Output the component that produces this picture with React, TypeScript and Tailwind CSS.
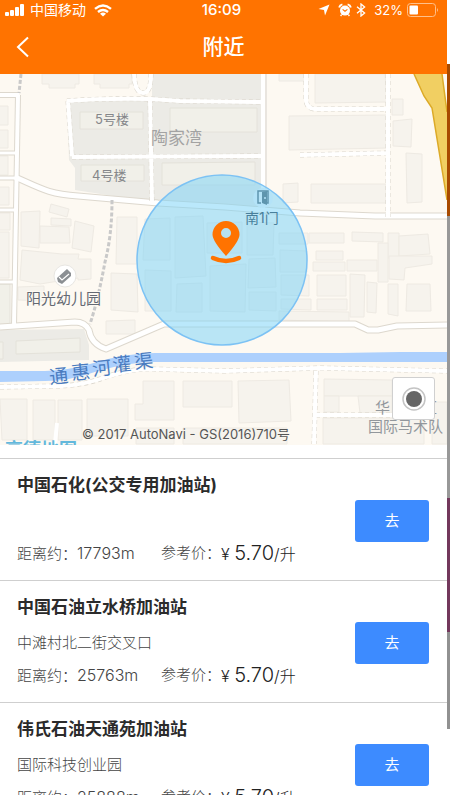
import { FC } from "react";

interface Station {
  id: number;
  name: string;
  address: string;
  distance: string;
  price: string;
}

const stations: Station[] = [
  { id: 1, name: "中国石化(公交专用加油站)", address: "", distance: "17793m", price: "5.70" },
  { id: 2, name: "中国石油立水桥加油站", address: "中滩村北二街交叉口", distance: "25763m", price: "5.70" },
  { id: 3, name: "伟氏石油天通苑加油站", address: "国际科技创业园", distance: "25888m", price: "5.70" },
];

// Building outlines, as svg points
const buildings: string[] = [
  "42,74 79,74 79,84 75,84 75,88 49,88 49,84 42,84",
  "94,74 132,74 132,84 129,84 129,88 100,88 100,84 94,84",
  "279,74 307,74 307,81 279,81",
  "315,74 385,74 387,102 315,103",
  "289,116 388,115 388,148 289,150",
  "392,99 403,99 403,115 392,115",
  "393,121 412,119 411,147 393,146",
  "406,153 422,154 422,202 407,203",
  "283,184 298,183 298,202 283,203",
  "311,184 386,184 386,203 311,203",
  "-1,106 8,106 8,125 -1,125",
  "-1,130 8,130 8,148 -1,148",
  "-1,156 8,156 8,175 -1,175",
  "-1,187 9,187 9,205 -1,205",
  "-1,213 10,213 10,230 -1,230",
  "-1,232 9,232 9,278 -1,278",
  "21,212 40,211 39,248 21,246",
  "51,204 69,209 67,217 49,212",
  "51,218 71,219 71,226 51,225",
  "40,226 69,227 70,243 40,243",
  "75,221 94,226 91,252 72,248",
  "22,250 62,254 79,254 78,259 91,259 91,279 78,280 78,278 40,284 20,280",
  "18,287 44,286 44,301 18,300",
  "117,217 137,217 137,264 116,264",
  "111,273 137,274 138,312 111,310",
  "106,321 135,320 135,334 106,334",
  "309,233 344,233 344,243 309,243",
  "352,232 383,233 383,242 352,241",
  "316,251 343,251 343,260 316,260",
  "388,233 399,233 399,258 388,258",
  "399,236 428,234 430,254 399,256",
  "378,243 388,243 388,282 378,282",
  "389,256 432,256 432,264 405,268 404,280 389,279",
  "313,262 345,262 345,271 313,271",
  "347,260 377,260 377,271 347,271",
  "317,275 346,275 346,296 317,296",
  "317,299 347,299 347,310 317,310",
  "350,274 365,275 364,317 350,317",
  "367,282 377,283 376,313 367,312",
  "388,284 398,284 398,316 388,314",
  "407,284 430,284 431,311 406,311",
  "279,311 349,312 349,322 279,320",
  "0,399 27,399 27,440 2,440",
  "33,400 55,400 55,440 33,440",
  "58,400 82,400 82,440 58,440",
  "87,399 128,399 128,436 87,436",
  "143,381 174,381 174,420 135,420 135,404 143,404",
  "183,381 232,381 232,407 183,407",
  "238,381 289,380 291,421 239,423",
  "324,379 392,380 392,396 324,396",
  "324,396 339,396 339,412 324,412",
  "358,396 392,396 392,413 360,413",
  "323,418 424,418 424,444 323,444",
  "432,402 447,402 447,444 432,444",
  "136,428 174,428 174,444 136,444",
  "183,428 287,428 287,444 183,444",
  "145,219 170,218 170,260 143,260",
  "175,217 203,216 206,276 175,278",
  "207,223 242,222 242,253 207,253",
  "247,222 274,223 273,255 247,255",
  "279,233 308,233 308,244 279,244",
  "145,270 171,271 171,311 145,311",
  "177,284 202,283 202,312 176,312",
  "210,266 246,264 245,312 210,311",
  "249,259 275,258 276,287 248,288",
  "249,292 276,292 276,311 249,310",
  "280,250 307,251 307,272 280,272",
  "281,275 309,275 309,296 281,295",
  "281,299 311,299 311,310 281,309",
];

// Buildings standing on the grey blocks
const blockBuildings: string[] = [
  "80,112 143,112 143,129 80,129",
  "81,165 144,165 144,181 81,181",
  "170,108 257,108 257,132 170,132",
  "162,163 255,162 255,185 162,185",
  "16,341 80,338 80,352 16,354",
  "-1,342 3,342 3,359 -1,359",
  "-1,284 10,284 10,325 -1,325",
];

const roads: { d: string; width: number }[] = [
  { d: "M18,95 L14,326", width: 4 },
  { d: "M0,95 H19", width: 4 },
  { d: "M0,153 H15", width: 3 },
  { d: "M0,178 H15", width: 3 },
  { d: "M0,210 H15", width: 3 },
  { d: "M0,282 H14", width: 3 },
  { d: "M15,177 C40,188 48,194 78,196 L158,203 L225,207 L300,213 L375,216 L447,216", width: 5 },
  { d: "M0,327 L75,322 Q85,322 89,330 Q91,344 106,349 L164,324 H355 L368,330 H378 L397,326 L447,325", width: 5 },
];

const StatusBar: FC = () => (
  <div className="grid h-5 grid-cols-[1fr_auto_1fr] items-center pl-1 pr-2 text-[13px] leading-5">
    <div className="flex items-center gap-1">
      <svg width="22" height="14" viewBox="0 0 22 14" fill="white">
        <rect x="1" y="9" width="4" height="4" rx="1" />
        <rect x="6" y="7" width="4" height="6" rx="1" />
        <rect x="11" y="4" width="4" height="9" rx="1" />
        <rect x="16" y="1" width="4" height="12" rx="1" />
      </svg>
      <span className="text-[14px]">中国移动</span>
      <svg width="18" height="13" viewBox="0 0 18 13" className="ml-1" fill="none" stroke="white" strokeWidth="2.4">
        <path d="M1,4.8 Q9,-2 17,4.8" />
        <path d="M4,8 Q9,3.8 14,8" />
        <path d="M9,12.6 L6,9.8 Q9,7.4 12,9.8 Z" fill="white" stroke="none" />
      </svg>
    </div>
    <span className="text-[15px] font-medium">16:09</span>
    <div className="flex items-center justify-end gap-1">
      <svg width="12" height="12" viewBox="0 0 12 12" fill="white">
        <path d="M11.5,0.5 L7,11.5 L6,6 L0.5,5 Z" />
      </svg>
      <svg width="14" height="14" viewBox="0 0 14 14" className="ml-1" fill="none" stroke="white">
        <circle cx="7" cy="7.6" r="5" fill="white" stroke="none" />
        <path d="M4.6,6.4 L7,8.2 L9.4,6.4" stroke="#ff7300" strokeWidth="1.1" />
        <path d="M1.2,4.4 Q1.8,2 4.4,1.4 M12.8,4.4 Q12.2,2 9.6,1.4" strokeWidth="2" />
        <path d="M3.6,11.6 L2.6,13 M10.4,11.6 L11.4,13" strokeWidth="1.4" />
      </svg>
      <svg width="10" height="14" viewBox="0 0 10 14" fill="none" stroke="white" strokeWidth="1.3">
        <path d="M1,3.8 L8.6,10 L5,13 V1 L8.6,4 L1,10.2" />
      </svg>
      <span className="ml-1">32%</span>
      <svg width="32" height="14" viewBox="0 0 32 14">
        <rect x="0.5" y="0.5" width="28" height="13" rx="3" fill="none" stroke="#ffc08a" />
        <rect x="2.5" y="2.5" width="8.5" height="9" rx="1" fill="white" />
        <path d="M30,5 Q32,7 30,9 Z" fill="#ffc08a" />
      </svg>
    </div>
  </div>
);

const Header: FC = () => (
  <header className="bg-[#ff7300] text-white">
    <StatusBar />
    <div className="grid h-[54px] grid-cols-[1fr_auto_1fr] items-center">
      <button aria-label="返回" className="flex h-full w-12 items-center pl-4">
        <svg width="14" height="22" viewBox="0 0 14 22" fill="none" stroke="white" strokeWidth="2">
          <path d="M12,1.5 L2,11 L12,20.5" />
        </svg>
      </button>
      <h1 className="text-[21px] font-medium">附近</h1>
    </div>
  </header>
);

const StationMap: FC = () => (
  <svg viewBox="0 74 447 371" preserveAspectRatio="xMidYMid slice" className="h-[371px] w-full bg-[#fdf9f2]">
    {/* Grey housing blocks */}
    <g fill="#ecebe6">
      <path d="M152,74 H261 V207 L158,203 L75,190 V168 L69,160 L67,99 L152,97 Z" />
      <path d="M0,330 L84,329 L89,345 V360 L0,362 Z" />
    </g>
    <g fill="#f6f3ed" stroke="#eeeae3">
      {buildings.map((points) => (
        <polygon key={points} points={points} />
      ))}
    </g>
    <g fill="#f1f0e9" stroke="#e4e2da">
      {blockBuildings.map((points) => (
        <polygon key={points} points={points} />
      ))}
    </g>

    {/* Yellow motorway */}
    <path d="M414,74 L424,96 L432,108 L447,200 V110 L442,74 Z" fill="#f1cf62" />
    <path d="M414,74 L424,96 L432,108 L447,200 M442,74 L447,112" fill="none" stroke="#dcaa28" strokeWidth="1.5" />

    {/* Roads: a casing first, then the white surface */}
    <g fill="none" stroke="#ddd8ce" strokeLinejoin="round">
      {roads.map((road) => (
        <path key={road.d} d={road.d} strokeWidth={road.width + 2} />
      ))}
    </g>
    <g fill="none" stroke="white" strokeLinejoin="round">
      {roads.map((road) => (
        <path key={road.d} d={road.d} strokeWidth={road.width} />
      ))}
    </g>

    {/* Footpaths */}
    <g fill="none" stroke="#dad5cb" strokeWidth="5" strokeDasharray="4 3">
      <path d="M134,74 Q135,93 143,93 Q151,93 151,74" />
      <path d="M67,101 Q105,98 151,99 L180,101 L262,102 M68,101 L72,156 M72,157 L262,156 M150,99 L152,202" />
      <path d="M306,74 V100 Q307,109 315,109 H389 M388,74 V217 M300,155 L389,153" />
      <path d="M0,387 L60,386 Q85,385 106,377 Q130,369 150,369 L225,371 L320,368 L447,371 M316,371 L314,444 M316,415 H392" />
    </g>
    <g fill="none" stroke="white" strokeWidth="4">
      <path d="M134,74 Q135,93 143,93 Q151,93 151,74" />
      <path d="M67,101 Q105,98 151,99 L180,101 L262,102 M68,101 L72,156 M72,157 L262,156 M150,99 L152,202" />
      <path d="M306,74 V100 Q307,109 315,109 H389 M388,74 V217 M300,155 L389,153" />
      <path d="M0,387 L60,386 Q85,385 106,377 Q130,369 150,369 L225,371 L320,368 L447,371 M316,371 L314,444 M316,415 H392" />
      <path d="M263,74 V209 M57,423 L55,444" />
    </g>
    <path d="M266,74 V190" stroke="#e9e5df" strokeWidth="2" />
    <g fill="none" stroke="#c9c9c9" strokeWidth="3" strokeDasharray="4 2">
      <path d="M21,74 L19,93" />
      <path d="M112,200 Q112,235 105,262 Q98,300 90,324" />
    </g>

    {/* River */}
    <path d="M0,371 L45,371 Q70,370 90,364 Q125,353 155,353 L340,353 L400,352 L447,352 V362 L155,362 Q130,362 98,371 Q70,381 45,381 L0,382 Z" fill="#add0fd" />

    {/* Search radius */}
    <circle cx="222" cy="260" r="85" fill="#7ad3f8" fillOpacity="0.52" stroke="#7cc2f4" strokeWidth="1.5" />

    {/* Places */}
    <circle cx="263" cy="198" r="10" fill="#b4e3f8" />
    <path d="M261,203 H258 V191 H268 V203 H265" fill="none" stroke="#5e95ae" strokeWidth="1.5" />
    <path d="M262,192 L267,191 V205 L262,203 Z" fill="#5e95ae" />
    <circle cx="265" cy="198" r="1" fill="#b4e3f8" />
    <circle cx="65" cy="276" r="11" fill="white" stroke="#e8e6e2" />
    <path d="M57,278 L67,269 L71,273 V276 L62,284 L58,282 Z" fill="#8b8f93" />
    <path d="M59,277 L62,280 L69,274" fill="none" stroke="white" strokeWidth="1.2" />

    <g fill="#85878a" fontSize="13">
      <text x="95" y="124">5号楼</text>
      <text x="92" y="180">4号楼</text>
    </g>
    <text x="151" y="144" fill="#a3a3a3" fontSize="17">陶家湾</text>
    <text x="245" y="223" fill="#487f9b" fontSize="14">南1门</text>
    <text x="26" y="304" fill="#646973" fontSize="15" stroke="#fdf9f2" strokeWidth="2" paintOrder="stroke">阳光幼儿园</text>
    <text x="50 72 93 113 135" y="384 380 376 372 369" rotate="-6" fill="#4a7cc0" fontSize="19">通惠河灌渠</text>
    <g fill="#92979c">
      <text x="375" y="413" fontSize="15">华</text>
      <text x="422" y="413" fontSize="15">汇</text>
      <text x="368" y="432" fontSize="15">国际马术队</text>
    </g>
    <text x="5" y="456" fill="#63b8dc" fontSize="18" fontWeight="700">高德地图</text>
    <text x="82" y="439" fill="#555555" fontSize="13">© 2017 AutoNavi - GS(2016)710号</text>

    {/* Current position */}
    <path
      d="M226,256 Q212.500,241 212.500,234.500 A13.500,13.500 0 1 1 239.500,234.500 Q239.500,241 226,256 Z M226,228 A5,5 0 1 0 226,238 A5,5 0 1 0 226,228 Z"
      fill="#ff7300"
      fillRule="evenodd"
    />
    <path d="M213,258 Q226,264 239,258" fill="none" stroke="#ff7300" strokeWidth="4.500" strokeLinecap="round" />
  </svg>
);

const StationRow: FC<{ station: Station }> = ({ station }) => (
  <li className="flex items-center justify-between border-t border-[#cfcfcf] pb-4 pl-[17px] pr-[18px] pt-[15px]">
    <div>
      <h2 className="text-[17px] font-bold leading-[22px] text-[#2b2b2b]">{station.name}</h2>
      <p className="mt-[15px] h-5 text-[15px] font-light leading-5 text-[#444444]">{station.address}</p>
      <p className="mt-[11px] flex h-[22px] items-center text-[15px] font-light leading-[22px] text-[#444444]">
        <span className="w-36">
          距离约：<span className="text-base leading-[22px]">{station.distance}</span>
        </span>
        <span>参考价：</span>
        <span className="text-base leading-[22px] text-[#222222]">
          ¥ <span className="text-xl leading-[22px]">{station.price}</span>/升
        </span>
      </p>
    </div>
    <button className="mt-1 h-[42px] w-[74px] rounded-[3px] bg-[#3d8bff] text-[15px] text-white">去</button>
  </li>
);

const App: FC = () => {
  return (
    <div className="flex h-screen overflow-hidden bg-white font-[Inter,'Noto_Sans_CJK_SC',sans-serif]">
      <main className="min-w-0 flex-1">
        <Header />
        <section className="relative">
          <StationMap />
          <button
            aria-label="定位"
            className="absolute bottom-[25px] right-3 flex h-[43px] w-[43px] items-center justify-center rounded-[3px] border border-[#d0d0d0] bg-white"
          >
            <svg width="26" height="26" viewBox="0 0 26 26">
              <circle cx="13" cy="13" r="11" fill="none" stroke="#c4c4c4" strokeWidth="1.5" />
              <circle cx="13" cy="13" r="8" fill="#666666" />
            </svg>
          </button>
        </section>
        <ul className="mt-[13px]">
          {stations.map((station) => (
            <StationRow key={station.id} station={station} />
          ))}
        </ul>
      </main>

      {/* Edge of the page behind */}
      <div className="flex w-[3px] flex-col pt-16">
        <div className="h-[152px] bg-[#a84a00]" />
        <div className="h-[282px] bg-[#989898]" />
        <div className="h-[134px] bg-[#73385c]" />
        <div className="h-[97px] bg-[#919191]" />
      </div>
    </div>
  );
};

export default App;
